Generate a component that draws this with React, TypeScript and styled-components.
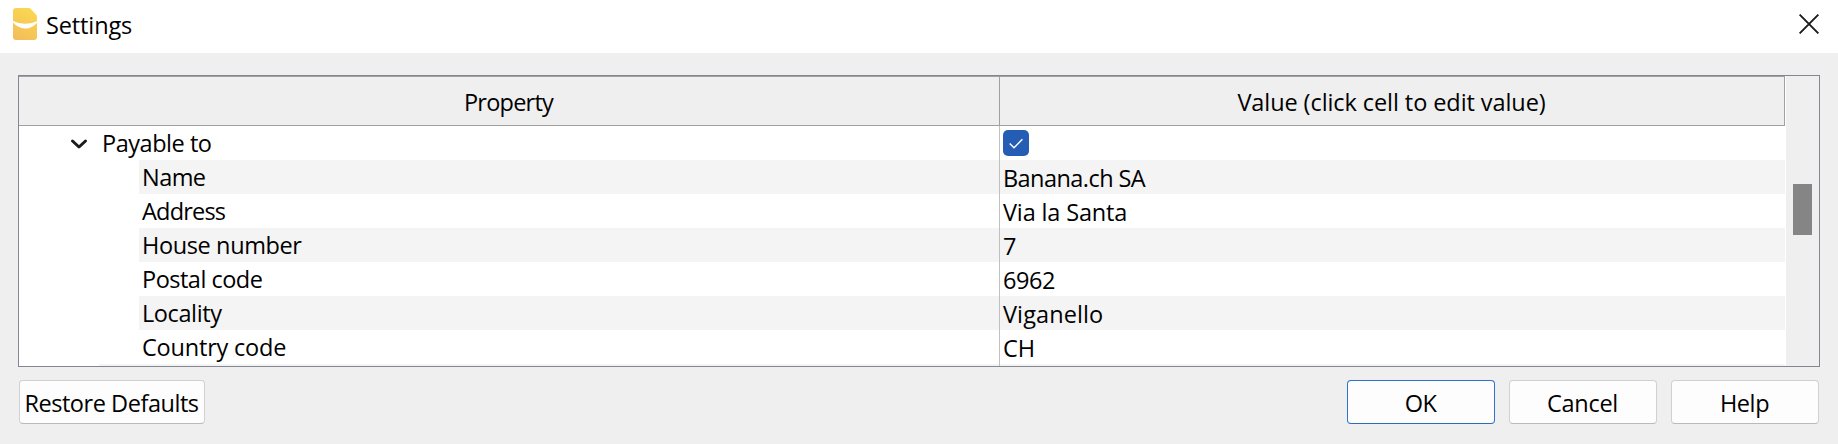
import React from 'react';
import styled, { createGlobalStyle } from 'styled-components';

const GlobalStyle = createGlobalStyle`
  * { box-sizing: border-box; }
  body {
    margin: 0;
    background: #efefef;
    font-family: "Open Sans", "Noto Sans", sans-serif;
    font-size: 23.5px;
    line-height: 34px;
    color: #000;
  }
`;

const Dialog = styled.div`
  display: flex;
  flex-direction: column;
  width: 1838px;
  height: 444px;
  overflow: hidden;
  background: #efefef;
`;

const TitleBar = styled.header`
  display: flex;
  flex: none;
  height: 53px;
  padding: 8px 19px 0 13px;
  background: #fff;
`;

const Label = styled.span<{ $spacing?: number }>`
  white-space: nowrap;
  letter-spacing: ${({ $spacing = 0 }) => $spacing}px;
`;

const Title = styled.h1`
  flex: 1;
  margin: 0 0 0 9px;
  font-size: inherit;
  font-weight: 400;
`;

const CloseButton = styled.button`
  width: 20px;
  height: 20px;
  margin-top: 6px;
  padding: 0;
  border: 0;
  background: none;
  svg { display: block; }
`;

const TreeFrame = styled.main`
  display: flex;
  flex: none;
  height: 292px;
  margin: 22px 18px 0;
  border: 1px solid #828790;
  background: #fff;
`;

const Table = styled.div`
  width: 1766px;
  margin-right: 1px;
  overflow: hidden;
`;

const HeaderRow = styled.div`
  display: flex;
  height: 50px;
  border: solid #a0a0a0;
  border-width: 1px 1px 1px 0;
  background: #efefef;
`;

const HeaderCell = styled.div<{ $divider?: boolean }>`
  flex: ${({ $divider }) => ($divider ? '0 0 981px' : '1')};
  padding: 8px 1px 0 0;
  text-align: center;
  border-right: ${({ $divider }) => ($divider ? '1px solid #a0a0a0' : '0')};
`;

const Row = styled.div<{ $shaded?: boolean; $indent: number }>`
  display: flex;
  height: 34px;
  padding-left: ${({ $indent }) => $indent}px;
  background: linear-gradient(${({ $shaded }) => ($shaded ? '#f4f4f4, #f4f4f4' : '#fff, #fff')})
    ${({ $indent }) => $indent}px 0 no-repeat;
`;

const PropertyCell = styled.div`
  display: flex;
  flex: 1;
  padding-left: 3px;
  border-right: 1px solid #c0c0c0;
`;

const ValueCell = styled.div`
  flex: 0 0 785px;
  padding: 1px 0 0 3px;
`;

const Chevron = styled.svg`
  flex: none;
  width: 18px;
  height: 12px;
  margin: 12px 14px 0 -32px;
`;

const Checkbox = styled.span`
  display: block;
  width: 26px;
  height: 26px;
  margin-top: 3px;
  border-radius: 5px;
  background: #265db4;
  svg { display: block; }
`;

const Scrollbar = styled.div`
  flex: 1;
  padding: 108px 7px 0;
  background: #efefef;
`;

const Thumb = styled.div`
  height: 51px;
  background: #858585;
`;

const Footer = styled.footer`
  display: flex;
  gap: 14px;
  padding: 13px 19px 0;
`;

const Spacer = styled.div`
  flex: 1;
`;

const Button = styled.button<{ $primary?: boolean; $width?: number }>`
  width: ${({ $width = 148 }) => $width}px;
  height: 44px;
  padding: 2px 1px 0 0;
  border: 1px solid ${({ $primary }) => ($primary ? '#2b73cc' : '#d0d0d0')};
  border-bottom-color: ${({ $primary }) => ($primary ? '#2b6cbf' : '#bababa')};
  border-radius: 4px;
  background: #fdfdfd;
  color: #000;
  font: inherit;
`;

const AppIcon = () => (
  <svg width="24" height="32" viewBox="0 0 24 32">
    <defs>
      <linearGradient id="banana" x1="0.7" y1="0" x2="0.3" y2="1">
        <stop offset="0" stopColor="#fad850" />
        <stop offset="1" stopColor="#f3be5b" />
      </linearGradient>
    </defs>
    <path d="M3 0H15.5Q16.8 0 17.6 .8L23.2 6.8Q24 7.7 24 9V29Q24 32 21 32H3Q0 32 0 29V3Q0 0 3 0Z" fill="url(#banana)" />
    <path d="M0 13Q11.5 18.5 24 13.2V14.7Q19 20.6 12 20.5Q5 20.3 0 14.6Z" fill="#fff" />
  </svg>
);

interface Property {
  name: string;
  value: string;
  nameSpacing: number;
  valueSpacing: number;
}

const properties: Property[] = [
  { name: 'Name', value: 'Banana.ch SA', nameSpacing: -0.55, valueSpacing: -0.56 },
  { name: 'Address', value: 'Via la Santa', nameSpacing: -0.8, valueSpacing: -0.15 },
  { name: 'House number', value: '7', nameSpacing: -0.38, valueSpacing: 0 },
  { name: 'Postal code', value: '6962', nameSpacing: -0.5, valueSpacing: -0.45 },
  { name: 'Locality', value: 'Viganello', nameSpacing: -0.4, valueSpacing: 0.1 },
  { name: 'Country code', value: 'CH', nameSpacing: -0.2, valueSpacing: 0 },
];

export default function App() {
  return (
    <Dialog>
      <GlobalStyle />
      <TitleBar>
        <AppIcon />
        <Title><Label $spacing={-0.12}>Settings</Label></Title>
        <CloseButton aria-label="Close">
          <svg width="20" height="20" viewBox="0 0 20 20">
            <path d="M.6 .6L19.4 19.4M19.4 .6L.6 19.4" stroke="#1a1a1a" strokeWidth="1.9" />
          </svg>
        </CloseButton>
      </TitleBar>
      <TreeFrame>
        <Table>
          <HeaderRow>
            <HeaderCell $divider><Label $spacing={-0.75}>Property</Label></HeaderCell>
            <HeaderCell><Label $spacing={-0.08}>Value (click cell to edit value)</Label></HeaderCell>
          </HeaderRow>
          <Row $indent={80}>
            <PropertyCell>
              <Chevron viewBox="0 0 18 12">
                <path d="M2.5 3L9 9L15.5 3" fill="none" stroke="#1b1b1b" strokeWidth="3" strokeLinecap="round" strokeLinejoin="round" />
              </Chevron>
              <Label $spacing={-0.47}>Payable to</Label>
            </PropertyCell>
            <ValueCell>
              <Checkbox role="checkbox" aria-checked="true">
                <svg width="26" height="26" viewBox="0 0 26 26">
                  <path d="M6.7 13.5L11 17.8L19.4 9.3" fill="none" stroke="#fff" strokeWidth="1.4" />
                </svg>
              </Checkbox>
            </ValueCell>
          </Row>
          {properties.map((p, i) => (
            <Row key={p.name} $indent={120} $shaded={i % 2 === 0}>
              <PropertyCell><Label $spacing={p.nameSpacing}>{p.name}</Label></PropertyCell>
              <ValueCell><Label $spacing={p.valueSpacing}>{p.value}</Label></ValueCell>
            </Row>
          ))}
          <Row $indent={80} $shaded>
            <PropertyCell />
            <ValueCell />
          </Row>
        </Table>
        <Scrollbar><Thumb /></Scrollbar>
      </TreeFrame>
      <Footer>
        <Button $width={186}><Label $spacing={-0.45}>Restore Defaults</Label></Button>
        <Spacer />
        <Button $primary><Label $spacing={-0.5}>OK</Label></Button>
        <Button><Label $spacing={-0.3}>Cancel</Label></Button>
        <Button><Label $spacing={-0.4}>Help</Label></Button>
      </Footer>
    </Dialog>
  );
}
